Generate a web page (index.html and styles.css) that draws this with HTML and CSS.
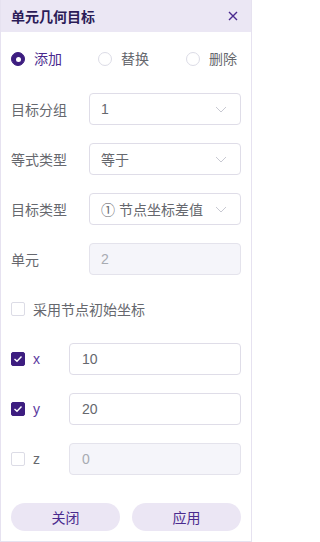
FILE: index.html
```html
<!DOCTYPE html>
<html lang="zh">
<head>
<meta charset="utf-8">
<link rel="stylesheet" href="styles.css">
</head>
<body>
<div class="panel">
  <div class="header">
    <span class="title">单元几何目标</span>
    <svg class="close" width="10" height="10" viewBox="0 0 10 10"><path d="M1 1L9 9M9 1L1 9" stroke="currentColor" stroke-width="1.4" fill="none"/></svg>
  </div>
  <div class="body">
    <div class="radios">
      <label class="radio checked"><span class="dot"></span>添加</label>
      <label class="radio"><span class="dot"></span>替换</label>
      <label class="radio"><span class="dot"></span>删除</label>
    </div>
    <div class="row first">
      <span class="label">目标分组</span>
      <div class="select"><span>1</span><svg class="chev" width="12" height="7" viewBox="0 0 12 7"><path d="M1 1L6 6L11 1" stroke="currentColor" stroke-width="1" fill="none"/></svg></div>
    </div>
    <div class="row">
      <span class="label">等式类型</span>
      <div class="select"><span>等于</span><svg class="chev" width="12" height="7" viewBox="0 0 12 7"><path d="M1 1L6 6L11 1" stroke="currentColor" stroke-width="1" fill="none"/></svg></div>
    </div>
    <div class="row">
      <span class="label">目标类型</span>
      <div class="select"><span>① 节点坐标差值</span><svg class="chev" width="12" height="7" viewBox="0 0 12 7"><path d="M1 1L6 6L11 1" stroke="currentColor" stroke-width="1" fill="none"/></svg></div>
    </div>
    <div class="row">
      <span class="label">单元</span>
      <div class="select disabled"><span>2</span></div>
    </div>
    <div class="row">
      <label class="check"><span class="box"></span><span class="ctext">采用节点初始坐标</span></label>
    </div>
    <div class="row">
      <label class="check on axis"><span class="box"><svg width="10" height="8" viewBox="0 0 10 8"><path d="M1.5 4L4 6.3L8.5 1.5" stroke="#fff" stroke-width="1.4" fill="none"/></svg></span><span class="ctext">x</span></label>
      <div class="select"><span class="val">10</span></div>
    </div>
    <div class="row">
      <label class="check on axis"><span class="box"><svg width="10" height="8" viewBox="0 0 10 8"><path d="M1.5 4L4 6.3L8.5 1.5" stroke="#fff" stroke-width="1.4" fill="none"/></svg></span><span class="ctext">y</span></label>
      <div class="select"><span class="val">20</span></div>
    </div>
    <div class="row">
      <label class="check axis"><span class="box"></span><span class="ctext">z</span></label>
      <div class="select disabled"><span class="val">0</span></div>
    </div>
    <div class="buttons">
      <button class="btn">关闭</button>
      <button class="btn">应用</button>
    </div>
  </div>
</div>
</body>
</html>
```
FILE: styles.css
```css
* { box-sizing: border-box; }
html, body { margin: 0; padding: 0; }
body {
  width: 252px;
  height: 542px;
  background: #fff;
  font-family: "Liberation Sans", "Noto Sans CJK SC", sans-serif;
  font-size: 14px;
  color: #606266;
}
.panel {
  width: 252px;
  height: 542px;
  border: 1px solid #e6e2f0;
  border-top: none;
  display: flex;
  flex-direction: column;
}
.header {
  height: 32px;
  background: #ebe7f4;
  display: flex;
  align-items: center;
  justify-content: space-between;
  padding: 0 10px 0 10px;
  flex-shrink: 0;
}
.title {
  font-weight: bold;
  font-size: 14px;
  color: #2b1c58;
}
.close {
  color: #4a2a8e;
  margin-right: 3px;
}
.body {
  padding: 0 10px;
  display: flex;
  flex-direction: column;
  gap: 18px;
}
.radios {
  height: 20px;
  margin-top: 17px;
  display: flex;
  align-items: center;
}
.radio {
  display: flex;
  align-items: center;
  line-height: 20px;
  color: #66686e;
}
.radio:nth-child(1) { width: 87px; }
.radio:nth-child(2) { width: 88px; }
.radio .dot {
  width: 14px;
  height: 14px;
  border-radius: 50%;
  border: 1px solid #dcdce6;
  margin-right: 9px;
  background: #fff;
}
.radio.checked { color: #4a2a8e; }
.radio.checked .dot {
  background: #3d1d80;
  border-color: #3d1d80;
  display: flex;
  align-items: center;
  justify-content: center;
}
.radio.checked .dot::after {
  content: "";
  width: 5px;
  height: 5px;
  border-radius: 50%;
  background: #fff;
}
.row {
  height: 32px;
  display: flex;
  align-items: center;
}
.row.first { margin-top: 6px; }
.label {
  width: 78px;
  color: #66686e;
  flex-shrink: 0;
}
.select {
  flex: 1;
  height: 32px;
  border: 1px solid #dfdde8;
  border-radius: 4px;
  display: flex;
  align-items: center;
  justify-content: space-between;
  padding: 0 11px 0 11px;
  color: #66686e;
  background: #fff;
}
.select.disabled {
  background: #f5f5fa;
  border-color: #e4e3ec;
  color: #a8abb2;
}
.chev { color: #c8c9d2; margin-right: 2px; }
.check {
  display: flex;
  align-items: center;
  color: #66686e;
}
.check.axis { width: 58px; flex-shrink: 0; }
.check .box {
  width: 14px;
  height: 14px;
  border: 1px solid #dcdce6;
  border-radius: 2px;
  margin-right: 8px;
  display: flex;
  align-items: center;
  justify-content: center;
  background: #fff;
}
.check.on .box {
  background: #3d1d80;
  border-color: #3d1d80;
}
.check.on .ctext { color: #5b3aa0; }
.val { padding-left: 1px; }
.buttons {
  margin-top: 10px;
  display: flex;
  justify-content: space-between;
  gap: 12px;
}
.btn {
  flex: 1;
  height: 28px;
  border: none;
  border-radius: 14px;
  background: #ebe6f4;
  color: #4a2a8e;
  font-family: "Liberation Sans", "Noto Sans CJK SC", sans-serif;
  font-size: 14px;
  padding: 0;
}
```
